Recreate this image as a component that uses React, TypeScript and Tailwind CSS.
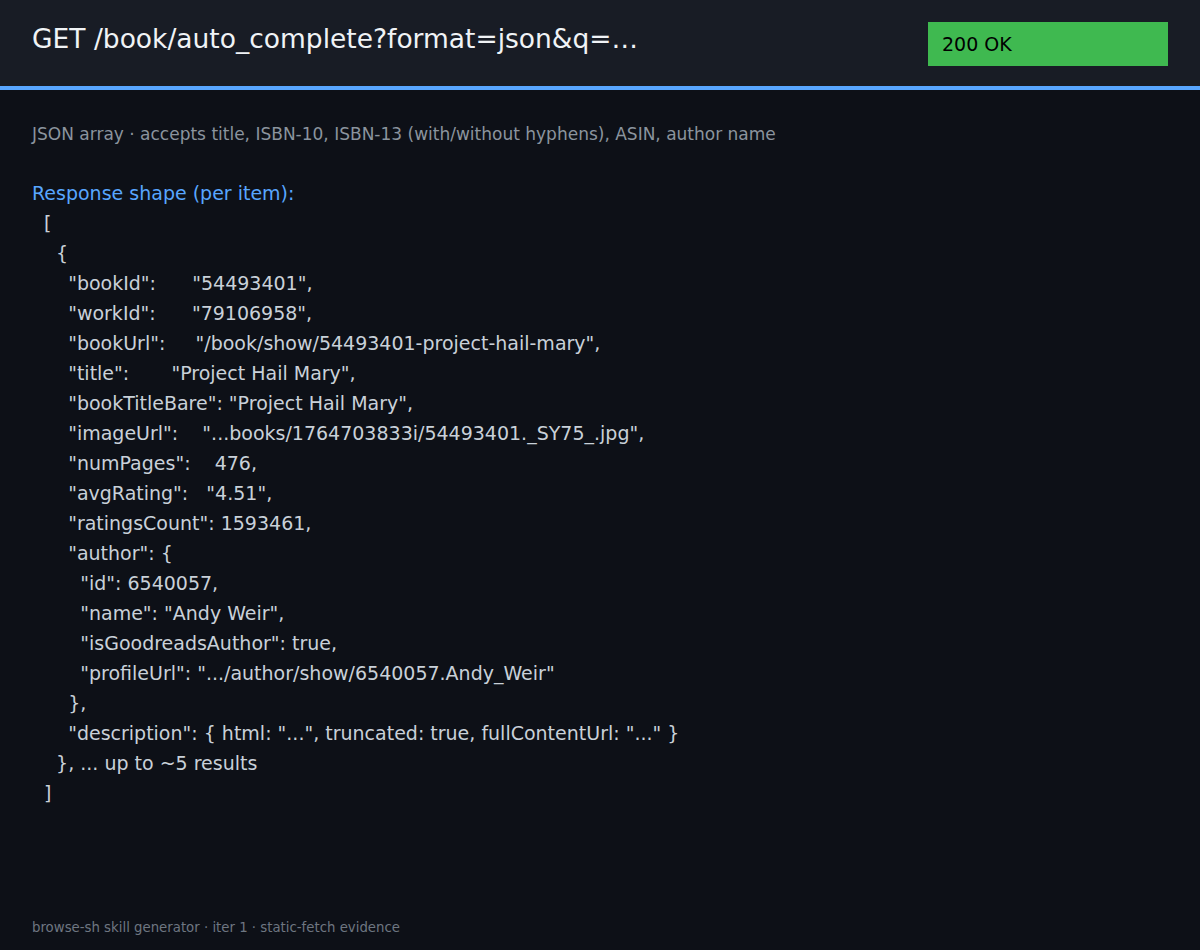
export default function App() {
  const code = `[
  {
    "bookId":      "54493401",
    "workId":      "79106958",
    "bookUrl":     "/book/show/54493401-project-hail-mary",
    "title":       "Project Hail Mary",
    "bookTitleBare": "Project Hail Mary",
    "imageUrl":    "...books/1764703833i/54493401._SY75_.jpg",
    "numPages":    476,
    "avgRating":   "4.51",
    "ratingsCount": 1593461,
    "author": {
      "id": 6540057,
      "name": "Andy Weir",
      "isGoodreadsAuthor": true,
      "profileUrl": ".../author/show/6540057.Andy_Weir"
    },
    "description": { html: "...", truncated: true, fullContentUrl: "..." }
  }, ... up to ~5 results
]`
  return (
    <div className="min-h-[950px] bg-[#0d1017] flex flex-col" style={{ fontFamily: '"DejaVu Sans", sans-serif' }}>
      <div className="h-[90px] bg-[#181c25] border-b-4 border-[#58a6ff] flex items-start justify-between px-8 pt-[22px]">
        <h1 className="text-[26.5px] leading-[38px] text-[#f0f3f6] -mt-[2px]">GET /book/auto_complete?format=json&amp;q=…</h1>
        <div className="w-[240px] h-[44px] bg-[#3fb950] text-black text-[19px] flex items-center px-[14px]">200 OK</div>
      </div>
      <div className="flex-1 px-8 pt-[32px]">
        <p className="text-[17px] leading-6 text-[#8b949e]">JSON array · accepts title, ISBN-10, ISBN-13 (with/without hyphens), ASIN, author name</p>
        <p className="mt-[32px] text-[19px] leading-[30px] text-[#58a6ff]">Response shape (per item):</p>
        <pre className="text-[19px] leading-[30px] text-[#c9d1d9] pl-[12px]" style={{ fontFamily: 'inherit' }}>{code}</pre>
      </div>
      <div className="px-8 pb-[12px] text-[13.3px] text-[#6e7681]">browse-sh skill generator · iter 1 · static-fetch evidence</div>
    </div>
  )
}
